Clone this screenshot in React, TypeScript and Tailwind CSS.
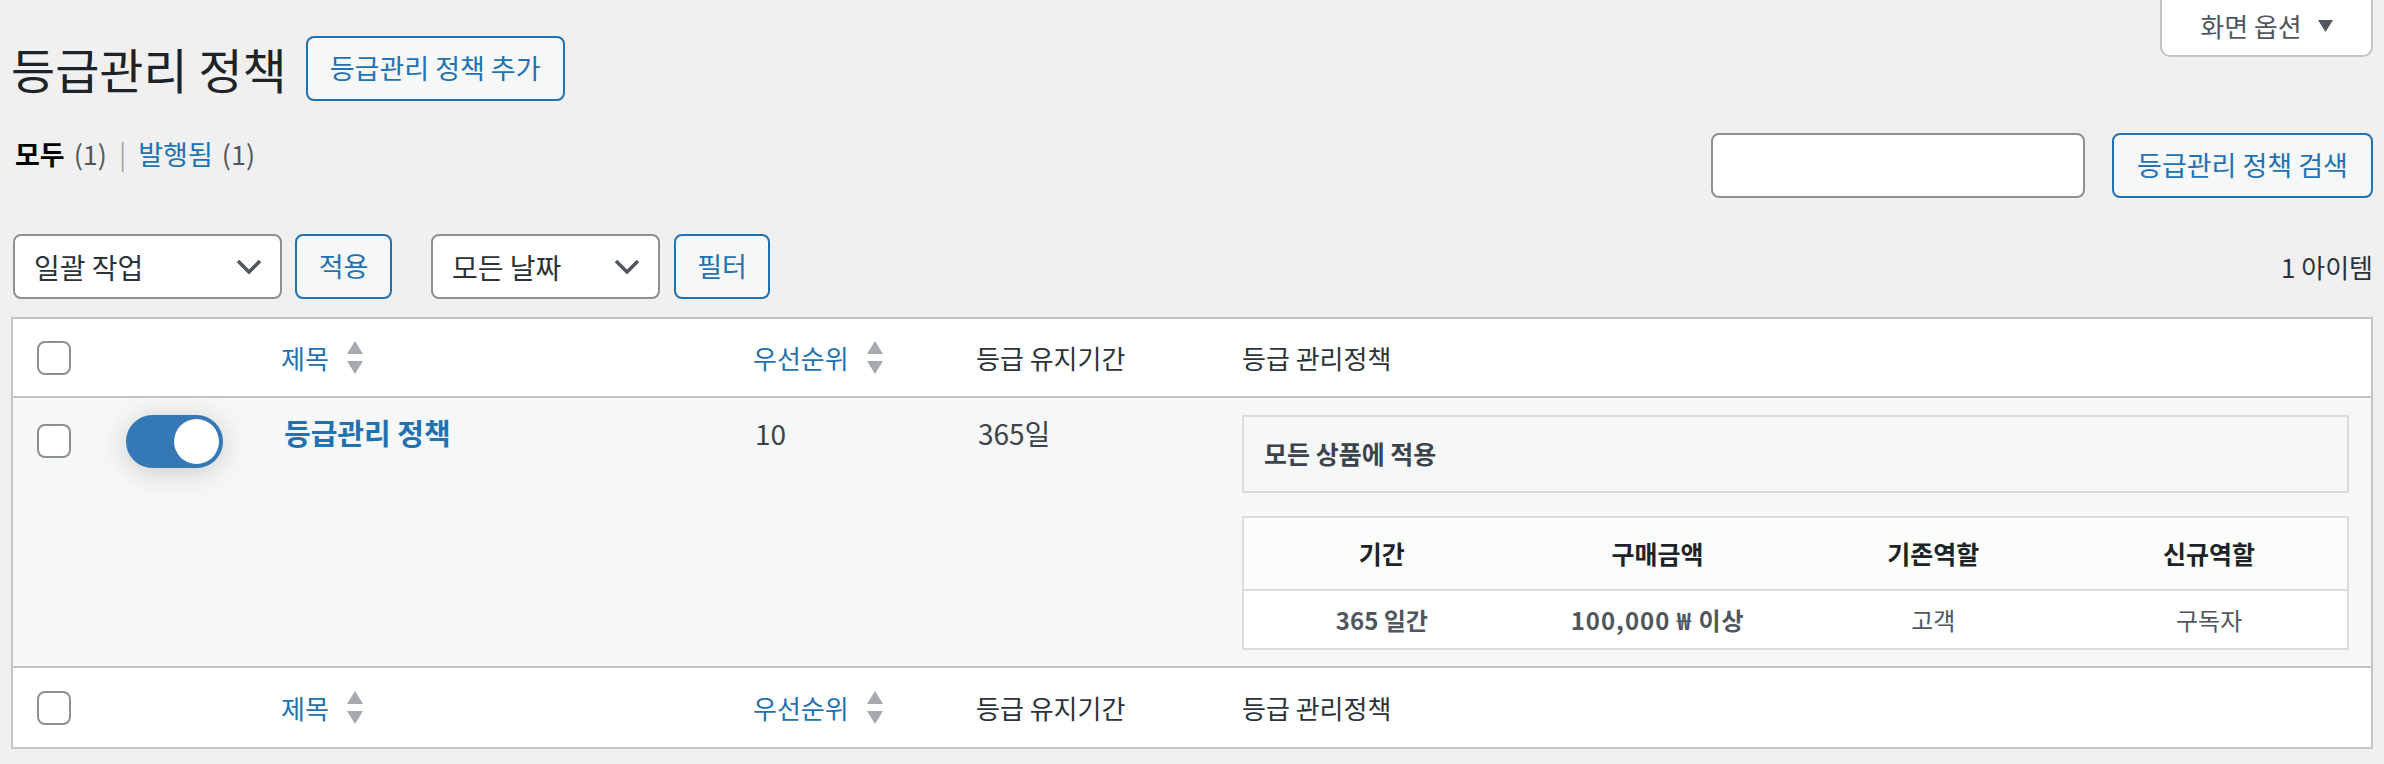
import React from 'react';

const FONT = '"Noto Sans CJK KR", "Noto Sans", sans-serif';

const SortArrows: React.FC = () => (
  <svg width="18" height="34" viewBox="0 0 18 34" className="ml-[17px] shrink-0">
    <polygon points="9,0 17,13 1,13" fill="#a7aaad" />
    <polygon points="1,20 17,20 9,33" fill="#a7aaad" />
  </svg>
);

const Checkbox: React.FC = () => (
  <span className="block w-[34px] h-[34px] bg-white border-2 border-[#8c8f94] rounded-[8px]" />
);

const Chevron: React.FC = () => (
  <svg width="26" height="16" viewBox="0 0 26 16">
    <path d="M2 2 L13 13 L24 2" fill="none" stroke="#50575e" strokeWidth="3.5" />
  </svg>
);

const Select: React.FC<{ label: string; width: string }> = ({ label, width }) => (
  <div
    className={`${width} h-[65px] bg-white border-2 border-[#8c8f94] rounded-[8px] flex items-center justify-between pl-[19px] pr-[18px] text-[28px] text-[#2c3338]`}
  >
    <span>{label}</span>
    <Chevron />
  </div>
);

const SecondaryButton: React.FC<{ label: string; className?: string }> = ({ label, className = '' }) => (
  <div
    className={`h-[65px] bg-[#f6f7f7] border-2 border-[#2271b1] rounded-[8px] flex items-center justify-center text-[27px] text-[#2271b1] ${className}`}
  >
    {label}
  </div>
);

const HeaderCells: React.FC = () => (
  <>
    <div className="w-[87px] pl-[24px] flex items-center">
      <Checkbox />
    </div>
    <div className="w-[165px]" />
    <div className="w-[472px] pl-[16px] flex items-center text-[#2271b1]">
      <span>제목</span>
      <SortArrows />
    </div>
    <div className="w-[223px] pl-[16px] flex items-center text-[#2271b1]">
      <span>우선순위</span>
      <SortArrows />
    </div>
    <div className="w-[266px] pl-[16px] text-[#2c3338]">등급 유지기간</div>
    <div className="flex-1 pl-[16px] text-[#2c3338]">등급 관리정책</div>
  </>
);

const levels = [
  { period: '365 일간', amount: '100,000 ₩ 이상', from: '고객', to: '구독자' },
];

export default function App() {
  return (
    <div className="min-h-screen bg-[#f0f0f1] px-[11px]" style={{ fontFamily: FONT }}>
      {/* title row + screen options */}
      <div className="flex justify-between items-start">
        <div className="flex items-center pt-[36px]">
          <h1 className="text-[48px] leading-[65px] text-[#1d2327] mr-[19px] -mt-[1px]">등급관리 정책</h1>
          <div className="h-[65px] px-[22px] bg-[#f6f7f7] border-2 border-[#2271b1] rounded-[8px] flex items-center text-[27px] text-[#2271b1]">
            등급관리 정책 추가
          </div>
        </div>
        <div className="w-[213px] h-[57px] bg-white border-2 border-t-0 border-[#c3c4c7] rounded-b-[10px] flex items-center justify-center gap-[16px] text-[26px] text-[#50575e] pb-[4px]">
          <span>화면 옵션</span>
          <svg width="15" height="12" viewBox="0 0 15 12">
            <polygon points="0,0 15,0 7.5,12" fill="#50575e" />
          </svg>
        </div>
      </div>

      {/* views + search */}
      <div className="flex justify-between items-start mt-[32px]">
        <div className="flex items-center text-[27px] leading-[36px] mt-[3px] pl-[4px]">
          <span className="font-bold text-black">모두</span>
          <span className="ml-[9px] text-[#50575e]">(1)</span>
          <span className="mx-[12px] text-[#a7aaad]">|</span>
          <span className="text-[#2271b1]">발행됨</span>
          <span className="ml-[9px] text-[#50575e]">(1)</span>
        </div>
        <div className="flex items-center gap-[27px]">
          <div className="w-[374px] h-[65px] bg-white border-2 border-[#8c8f94] rounded-[8px]" />
          <SecondaryButton label="등급관리 정책 검색" className="w-[261px]" />
        </div>
      </div>

      {/* tablenav */}
      <div className="flex items-center justify-between mt-[36px] pl-[2px]">
        <div className="flex items-center">
          <Select label="일괄 작업" width="w-[269px]" />
          <SecondaryButton label="적용" className="w-[97px] ml-[13px]" />
          <Select label="모든 날짜" width="w-[229px] ml-[39px]" />
          <SecondaryButton label="필터" className="w-[96px] ml-[14px]" />
        </div>
        <div className="text-[26px] text-[#2c3338]">1 아이템</div>
      </div>

      {/* list table */}
      <div className="mt-[18px] bg-white border-2 border-[#c3c4c7] text-[26px]">
        <div className="flex items-center h-[79px] border-b-2 border-[#c3c4c7]">
          <HeaderCells />
        </div>

        <div className="flex items-start bg-[#f6f7f7] border-b-2 border-[#c3c4c7] pb-[16px]">
          <div className="w-[87px] pl-[24px] pt-[26px]">
            <Checkbox />
          </div>
          <div className="w-[165px] pl-[26px] pt-[17px]">
            <div className="w-[97px] h-[53px] rounded-full bg-[#3578b6] flex items-center justify-end pr-[4px] shadow-[0_4px_28px_rgba(0,0,0,0.18)]">
              <span className="block w-[45px] h-[45px] rounded-full bg-white" />
            </div>
          </div>
          <div className="w-[472px] pl-[19px] pt-[16px] text-[29px] leading-[36px] font-bold text-[#2271b1]">
            등급관리 정책
          </div>
          <div className="w-[223px] pl-[18px] pt-[17px] text-[28px] leading-[36px] text-[#3c434a]">10</div>
          <div className="w-[266px] pl-[18px] pt-[17px] text-[28px] leading-[36px] text-[#3c434a]">365일</div>
          <div className="flex-1 pl-[16px] pr-[22px] pt-[17px]">
            <div className="h-[78px] border-2 border-[#dcdcde] bg-[#f6f7f7] flex items-center pl-[20px] text-[25px] font-bold text-[#3c434a]">
              모든 상품에 적용
            </div>
            <div className="mt-[23px] border-2 border-[#dcdcde] bg-white">
              <div className="grid grid-cols-4 h-[73px] items-center bg-[#fafdf9] border-b-2 border-[#dcdcde] text-[25px] font-bold text-[#1d2327] text-center">
                <div>기간</div>
                <div>구매금액</div>
                <div>기존역할</div>
                <div>신규역할</div>
              </div>
              {levels.map((l, i) => (
                <div key={i} className="grid grid-cols-4 h-[57px] items-center text-center text-[24px] text-[#50575e]">
                  <div className="font-bold">{l.period}</div>
                  <div className="font-bold tracking-[1px]">{l.amount}</div>
                  <div>{l.from}</div>
                  <div>{l.to}</div>
                </div>
              ))}
            </div>
          </div>
        </div>

        <div className="flex items-center h-[79px]">
          <HeaderCells />
        </div>
      </div>
    </div>
  );
}
